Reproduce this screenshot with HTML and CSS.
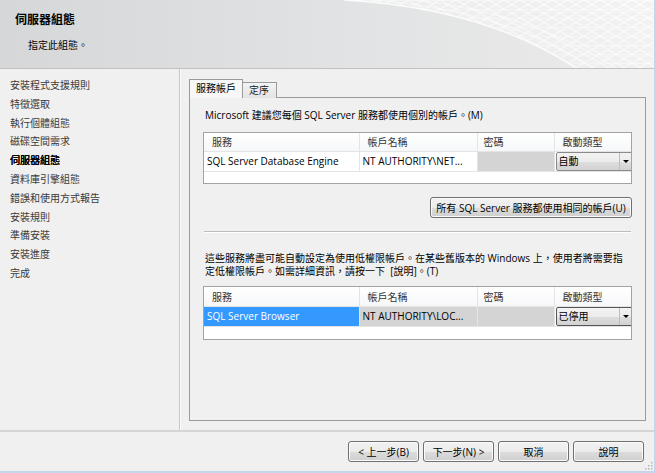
FILE: index.html
```html
<!DOCTYPE html>
<html lang="zh-TW">
<head>
<meta charset="UTF-8" />
<title>伺服器組態</title>
<link rel="stylesheet" href="styles.css">
</head>
<body>

<div class="window">
  <div class="header">
    <svg class="mesh" width="310" height="68" viewBox="0 0 310 68">
      <defs>
        <pattern id="tri" width="16" height="9" patternUnits="userSpaceOnUse">
          <path d="M0 0 L16 9 M16 0 L0 9 M0 0 H16" stroke="#fff" stroke-width="1" fill="none"/>
        </pattern>
        <linearGradient id="fade" x1="0" y1="1" x2="1" y2="0">
          <stop offset="0" stop-color="#fff" stop-opacity="0.2"/>
          <stop offset="0.5" stop-color="#fff" stop-opacity="0.8"/>
          <stop offset="1" stop-color="#fff" stop-opacity="1"/>
        </linearGradient>
        <mask id="sweep">
          <path d="M0 0 Q140 8 232 68 H310 V0 Z" fill="url(#fade)"/>
        </mask>
      </defs>
      <g mask="url(#sweep)">
        <rect width="310" height="68" fill="url(#tri)"/>
        <rect width="310" height="68" fill="#fff" opacity="0.4"/>
      </g>
      <path d="M0 0 Q140 8 232 68" stroke="#fff" stroke-width="1.5" fill="none" opacity="0.8"/>
      <path d="M30 0 Q160 10 250 68" stroke="#fff" stroke-width="1" fill="none" opacity="0.6"/>
      <path d="M70 0 Q185 12 272 68" stroke="#fff" stroke-width="1" fill="none" opacity="0.6"/>
    </svg>
    <h1 class="title">伺服器組態</h1>
    <p class="subtitle">指定此組態。</p>
  </div>

  <div class="main">
    <ul class="steps">
      <li>安裝程式支援規則</li>
      <li>特徵選取</li>
      <li>執行個體組態</li>
      <li>磁碟空間需求</li>
      <li class="current">伺服器組態</li>
      <li>資料庫引擎組態</li>
      <li>錯誤和使用方式報告</li>
      <li>安裝規則</li>
      <li>準備安裝</li>
      <li>安裝進度</li>
      <li>完成</li>
    </ul>

    <div class="content">
      <div class="tabs">
        <div class="tab active">服務帳戶</div>
        <div class="tab">定序</div>
      </div>
      <div class="tab-page">
        <p class="note">Microsoft 建議您每個 SQL Server 服務都使用個別的帳戶。(M)</p>

        <div class="grid-box first">
          <table class="grid">
            <colgroup>
              <col class="c-svc"><col class="c-acct"><col class="c-pwd"><col class="c-type">
            </colgroup>
            <tr>
              <th>服務</th><th>帳戶名稱</th><th class="pwd-head">密碼</th><th>啟動類型</th>
            </tr>
            <tr>
              <td>SQL Server Database Engine</td>
              <td>NT AUTHORITY\NET...</td>
              <td class="locked"></td>
              <td class="combo-cell">
                <div class="combo"><span class="value">自動</span><span class="drop"><i class="arrow"></i></span></div>
              </td>
            </tr>
          </table>
        </div>

        <div class="actions">
          <button class="btn wide">所有 SQL Server 服務都使用相同的帳戶(U)</button>
        </div>

        <div class="sep"></div>

        <p class="note para">這些服務將盡可能自動設定為使用低權限帳戶。在某些舊版本的 Windows 上，使用者將需要指<br>定低權限帳戶。如需詳細資訊，請按一下&nbsp; [說明]。(T)</p>

        <div class="grid-box second">
          <table class="grid">
            <colgroup>
              <col class="c-svc"><col class="c-acct"><col class="c-pwd"><col class="c-type">
            </colgroup>
            <tr class="tall">
              <th>服務</th><th>帳戶名稱</th><th class="pwd-head">密碼</th><th>啟動類型</th>
            </tr>
            <tr>
              <td class="selected">SQL Server Browser</td>
              <td class="locked">NT AUTHORITY\LOC...</td>
              <td class="locked"></td>
              <td class="combo-cell">
                <div class="combo dark"><span class="value">已停用</span><span class="drop"><i class="arrow"></i></span></div>
              </td>
            </tr>
          </table>
        </div>
      </div>
    </div>
  </div>

  <div class="footer">
    <button class="btn">&lt; 上一步(B)</button>
    <button class="btn">下一步(N) &gt;</button>
    <button class="btn">取消</button>
    <button class="btn">說明</button>
    <svg class="grip" width="8" height="8" viewBox="0 0 8 8">
      <rect x="6" y="0" width="1.5" height="1.5" fill="#b4b8be"/>
      <rect x="3" y="3" width="1.5" height="1.5" fill="#b4b8be"/>
      <rect x="6" y="3" width="1.5" height="1.5" fill="#b4b8be"/>
      <rect x="0" y="6" width="1.5" height="1.5" fill="#b4b8be"/>
      <rect x="3" y="6" width="1.5" height="1.5" fill="#b4b8be"/>
      <rect x="6" y="6" width="1.5" height="1.5" fill="#b4b8be"/>
    </svg>
  </div>
</div>

</body>
</html>
```

FILE: styles.css
```css
* {
  box-sizing: border-box;
}
body {
  margin: 0;
  font-family: 'Open Sans', 'Noto Sans CJK TC', sans-serif;
  font-size: 10px;
  color: #000;
  background: #f0f0f0;
}
.window {
  width: 656px;
  height: 473px;
  display: flex;
  flex-direction: column;
  background: #f0f0f0;
  border-right: 2px solid #c4d6ea;
  border-bottom: 2px solid #c4d6ea;
}
.header {
  position: relative;
  flex: none;
  height: 69px;
  border-bottom: 1px solid #c2c2c2;
  background: linear-gradient(to right, #d6d7d9, #e2e3e4 55%, #ebebeb);
  overflow: hidden;
}
/* fondo decorativo */
.mesh {
  position: absolute;
  top: 0;
  right: 0;
}
.title {
  position: relative;
  margin: 0;
  padding: 12px 0 0 15px;
  font-size: 12px;
  font-weight: bold;
  line-height: 16px;
}
.subtitle {
  position: relative;
  margin: 0;
  padding: 11px 0 0 28px;
  line-height: 13px;
}
.main {
  flex: 1;
  display: flex;
  min-height: 0;
}
.steps {
  flex: none;
  width: 180px;
  margin: 0;
  padding: 7px 0 0 10px;
  list-style: none;
  line-height: 18.8px;
  color: #3a3a3a;
  border-right: 1px solid #c8c8c8;
}
.steps .current {
  color: #000;
  text-shadow: 0 0 0.5px #000, 0.3px 0 0 #000;
}
.content {
  flex: 1;
  display: flex;
  flex-direction: column;
  padding: 10px 10px 9px 8px;
  border-left: 1px solid #fbfbfb;
}
.tabs {
  display: flex;
  align-items: flex-end;
  position: relative;
  z-index: 1;
  margin-bottom: -1px;
}
.tab {
  height: 16px;
  line-height: 15px;
  padding: 0 7px 0 6px;
  border: 1px solid #9a9a9a;
  border-bottom: none;
  border-left: none;
  background: linear-gradient(#f3f3f3, #e4e4e4);
  color: #222;
}
.tab.active {
  height: 19px;
  line-height: 17px;
  padding: 0 6px 0 6px;
  border-left: 1px solid #9a9a9a;
  background: #f7f7f7;
  color: #000;
}
.tab-page {
  flex: 1;
  padding: 11px 13px 0 13px;
  border: 1px solid #9a9a9a;
  background: #f0f0f0;
}
.note {
  margin: 0;
  padding-left: 2px;
  line-height: 13px;
  white-space: nowrap;
}
.grid-box {
  width: 429px;
  margin-top: 10px;
  border: 1px solid #a3a3a3;
  background: #fff;
}
.grid-box.first {
  height: 52px;
}
.grid-box.second {
  height: 54px;
  margin-top: 8px;
}
.grid {
  width: 427px;
  border-collapse: collapse;
  table-layout: fixed;
}
.c-svc { width: 155px; }
.c-acct { width: 118px; }
.c-pwd { width: 77px; }
.c-type { width: 77px; }
.grid th {
  height: 18px;
  padding: 0 0 0 8px;
  font-weight: normal;
  text-align: left;
  color: #333;
  border-right: 1px solid #e4e4e4;
  border-bottom: 1px solid #e4e4e4;
  background: linear-gradient(#fff, #f6f7f9);
}
.grid .tall th {
  height: 19px;
}
.grid th.pwd-head {
  padding-left: 6px;
}
.grid th:last-child {
  border-right: none;
}
.grid td {
  height: 20px;
  padding: 0 0 0 3px;
  white-space: nowrap;
  overflow: hidden;
  border-right: 1px solid #e4e4e4;
  border-bottom: 1px solid #e4e4e4;
}
.grid td:last-child {
  border-right: none;
}
.grid td.locked {
  background: #d4d4d4;
}
.grid td.selected {
  background: #3399ff;
  color: #fff;
}
.grid td.combo-cell {
  padding: 0 0 0 1px;
  background: #fff;
}
.combo {
  display: flex;
  width: 77px;
  height: 19px;
  border: 1px solid #8a8a8a;
  border-radius: 2px;
  background: linear-gradient(#f3f3f3, #ececec 50%, #dedede 51%, #d2d2d2);
}
.combo.dark {
  border-color: #555;
}
.combo .value {
  flex: 1;
  padding-left: 2px;
  line-height: 17px;
}
.combo .drop {
  width: 13px;
  display: flex;
  align-items: center;
  justify-content: center;
  border-left: 1px solid #bdbdbd;
}
.arrow {
  width: 0;
  height: 0;
  border-top: 3px solid #000;
  border-left: 3px solid transparent;
  border-right: 3px solid transparent;
}
.actions {
  width: 429px;
  display: flex;
  justify-content: flex-end;
  margin-top: 13px;
}
.btn {
  height: 21px;
  padding: 0 6px;
  font-family: inherit;
  font-size: 10px;
  color: #000;
  border: 1px solid #707070;
  border-radius: 3px;
  background: linear-gradient(#f2f2f2, #ebebeb 50%, #dddddd 51%, #cfcfcf);
  box-shadow: inset 0 0 0 1px #fbfbfb;
}
.btn.wide {
  width: 202px;
  padding: 0;
}
.sep {
  width: 427px;
  margin: 13px 0 0 1px;
  border-top: 1px solid #bdbdbd;
  border-bottom: 1px solid #fff;
}
.note.para {
  margin-top: 19px;
}
.footer {
  position: relative;
  flex: none;
  height: 41px;
  display: flex;
  justify-content: flex-end;
  align-items: flex-start;
  gap: 4px;
  padding: 9px 10px 0 0;
  border-top: 2px solid #d5d5d5;
}
.footer .btn {
  width: 71px;
}
.grip {
  position: absolute;
  right: 1px;
  bottom: 1px;
}
```
